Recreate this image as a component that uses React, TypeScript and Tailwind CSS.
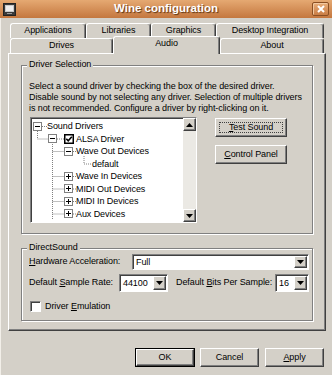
import React from "react";

const raised =
  "border border-t-white border-l-white border-r-[#404040] border-b-[#404040] shadow-[inset_-1px_-1px_0_#808080]";
const sunken =
  "border border-t-[#808080] border-l-[#808080] border-r-white border-b-white shadow-[inset_1px_1px_0_#404040]";

function DownArrow() {
  return (
    <svg width="7" height="4" viewBox="0 0 7 4">
      <path d="M0 0H7L3.5 4Z" fill="#000" />
    </svg>
  );
}
function UpArrow() {
  return (
    <svg width="7" height="4" viewBox="0 0 7 4">
      <path d="M0 4H7L3.5 0Z" fill="#000" />
    </svg>
  );
}

function Expander({ plus }: { plus?: boolean }) {
  return (
    <svg width="9" height="9" viewBox="0 0 9 9" className="shrink-0">
      <rect x="0.5" y="0.5" width="8" height="8" fill="#fff" stroke="#808080" />
      <path d="M2 4.5H7" stroke="#000" />
      {plus && <path d="M4.5 2V7" stroke="#000" />}
    </svg>
  );
}

function GroupBox({
  label,
  className,
  children,
}: {
  label: string;
  className: string;
  children: React.ReactNode;
}) {
  return (
    <div
      className={`relative border border-[#808080] shadow-[inset_1px_1px_0_#fff,1px_1px_0_#fff] ${className}`}
    >
      <span className="absolute -top-[7px] left-[5px] px-[2px] bg-[#d4d0c8] leading-[11px]">
        {label}
      </span>
      {children}
    </div>
  );
}

function Combo({ className, value }: { className: string; value: string }) {
  return (
    <div className={`${sunken} bg-white flex p-[1px] ${className}`}>
      <div className="flex-1 flex items-center pl-[2px] leading-none">{value}</div>
      <div className={`${raised} w-[13px] bg-[#d4d0c8] flex items-center justify-center`}>
        <DownArrow />
      </div>
    </div>
  );
}

function Tab({
  label,
  className,
  selected,
}: {
  label: string;
  className: string;
  selected?: boolean;
}) {
  return (
    <div
      className={`${className} flex items-center justify-center border-t border-l border-r border-t-white border-l-white border-r-[#404040] shadow-[inset_-1px_0_0_#808080] rounded-t-[3px] bg-[#d4d0c8] ${
        selected ? "relative z-10 -mt-[2px] h-[18px] pb-[3px]" : "h-[15px]"
      }`}
    >
      {label}
    </div>
  );
}

function Button({
  children,
  className,
  focus,
}: {
  children: React.ReactNode;
  className: string;
  focus?: boolean;
}) {
  return (
    <div
      className={`${raised} relative bg-[#d4d0c8] flex items-center justify-center ${className}`}
    >
      {focus && (
        <span className="absolute inset-[3px] border border-dotted border-[#404040]" />
      )}
      {children}
    </div>
  );
}

export default function App() {
  return (
    <div className="w-[332px] h-[375px] overflow-hidden bg-[#d4d0c8] flex flex-col text-black text-[9px] tracking-[-0.08px] font-['Liberation_Sans',Arial,sans-serif]">
      {/* Title bar */}
      <div className="h-[18px] shrink-0 grid grid-cols-[1fr_auto_1fr] items-center px-[3px] bg-linear-to-b from-[#e5a972] to-[#c4773e]">
        <div className="flex items-center">
          <svg width="13" height="13" viewBox="0 0 13 13">
            <rect x="0.5" y="0.5" width="12" height="12" fill="#3a3a3a" stroke="#222" />
            <rect x="2" y="2" width="9" height="7" fill="#c9c9c9" />
            <rect x="3" y="3" width="7" height="5" fill="#eeeeee" />
            <rect x="4" y="10" width="5" height="1" fill="#999" />
          </svg>
        </div>
        <div className="text-white font-bold text-[11.5px] tracking-normal leading-none [text-shadow:1px_1px_1px_#5b3515]">
          Wine configuration
        </div>
        <div className="flex justify-end">
          <div className="w-[17px] h-[14px] rounded-[2px] border border-[#8b4f22] bg-linear-to-b from-[#e8ae7a] to-[#c97d44] flex items-center justify-center shadow-[inset_1px_1px_0_#f2c89f]">
            <svg width="8" height="8" viewBox="0 0 8 8">
              <path d="M1 1L7 7M7 1L1 7" stroke="#fff" strokeWidth="2" />
            </svg>
          </div>
        </div>
      </div>

      {/* Body */}
      <div className="flex-1 flex flex-col pl-[7px] pr-[6px] border-l border-[#f2efe9]">
        {/* Tabs row 1 */}
        <div className="mt-[5px] flex h-[15px] pl-[2px]">
          <Tab label="Applications" className="w-[76px]" />
          <Tab label="Libraries" className="w-[65px]" />
          <Tab label="Graphics" className="w-[65px]" />
          <Tab label="Desktop Integration" className="w-[108px]" />
        </div>
        {/* Tabs row 2 */}
        <div className="flex h-[15px] items-start pl-[2px]">
          <Tab label="Drives" className="w-[103px]" />
          <Tab label="Audio" className="w-[107px]" selected />
          <Tab label="About" className="w-[104px]" />
        </div>

        {/* Panel */}
        <div className="h-[278px] border border-t-white border-l-white border-r-[#404040] border-b-[#404040] shadow-[inset_-1px_-1px_0_#808080] px-[12px] pt-[11px]">
          <GroupBox label="Driver Selection" className="h-[169px] pt-[15px] pl-[7px]">
            <p className="leading-[11px] whitespace-nowrap">
              Select a sound driver by checking the box of the desired driver.
              <br />
              Disable sound by not selecting any driver. Selection of multiple drivers
              <br />
              is not recommended. Configure a driver by right-clicking on it.
            </p>
            <div className="mt-[3px] flex items-start">
              {/* Tree */}
              <div className={`${sunken} ml-[1px] w-[167px] h-[106px] bg-white flex`}>
                <div className="relative flex-1 pt-[2px] leading-[12.5px]">
                  <svg
                    className="absolute left-0 top-0 pointer-events-none"
                    width="150"
                    height="102"
                    viewBox="0 0 150 102"
                  >
                    <g stroke="#808080" strokeDasharray="1 1" fill="none">
                      <path d="M11 8.5H16" />
                      <path d="M6.5 13V21H17" />
                      <path d="M26 21H33" />
                      <path d="M21.5 26V102" />
                      <path d="M21.5 33.5H33M42 33.5H45" />
                      <path d="M53 38V46H60" />
                      <path d="M21.5 58.5H33M42 58.5H45" />
                      <path d="M21.5 71H33M42 71H45" />
                      <path d="M21.5 83.5H33M42 83.5H45" />
                      <path d="M21.5 96H33M42 96H45" />
                    </g>
                  </svg>
                  <div className="relative h-[12.5px] flex items-center pl-[2px]">
                    <Expander />
                    <span className="ml-[5px]">Sound Drivers</span>
                  </div>
                  <div className="relative h-[12.5px] flex items-center pl-[17px]">
                    <Expander />
                    <svg width="10" height="10" viewBox="0 0 10 10" className="ml-[7px] shrink-0">
                      <rect x="0.75" y="0.75" width="8.5" height="8.5" fill="#fff" stroke="#000" strokeWidth="1.5" />
                      <path d="M2.3 4.8L4.2 6.8L7.8 2.8" stroke="#000" strokeWidth="1.6" fill="none" />
                    </svg>
                    <span className="ml-[2px]">ALSA Driver</span>
                  </div>
                  <div className="relative h-[12.5px] flex items-center pl-[33px]">
                    <Expander />
                    <span className="ml-[3px]">Wave Out Devices</span>
                  </div>
                  <div className="relative h-[12.5px] flex items-center pl-[61px]">
                    <span>default</span>
                  </div>
                  <div className="relative h-[12.5px] flex items-center pl-[33px]">
                    <Expander plus />
                    <span className="ml-[3px]">Wave In Devices</span>
                  </div>
                  <div className="relative h-[12.5px] flex items-center pl-[33px]">
                    <Expander plus />
                    <span className="ml-[3px]">MIDI Out Devices</span>
                  </div>
                  <div className="relative h-[12.5px] flex items-center pl-[33px]">
                    <Expander plus />
                    <span className="ml-[3px]">MIDI In Devices</span>
                  </div>
                  <div className="relative h-[12.5px] flex items-center pl-[33px]">
                    <Expander plus />
                    <span className="ml-[3px]">Aux Devices</span>
                  </div>
                </div>
                {/* Scrollbar */}
                <div className="w-[13px] flex flex-col bg-[#ebe9e4]">
                  <div className={`${raised} h-[13px] bg-[#d4d0c8] flex items-center justify-center`}>
                    <UpArrow />
                  </div>
                  <div className="flex-1" />
                  <div className={`${raised} h-[13px] bg-[#d4d0c8] flex items-center justify-center`}>
                    <DownArrow />
                  </div>
                </div>
              </div>
              {/* Buttons */}
              <div className="ml-[18px] mt-[1px] flex flex-col gap-[8px]">
                <Button className="w-[72px] h-[19px]" focus>
                  <span>
                    <u>T</u>est Sound
                  </span>
                </Button>
                <Button className="w-[72px] h-[19px]">
                  <span>
                    <u>C</u>ontrol Panel
                  </span>
                </Button>
              </div>
            </div>
          </GroupBox>

          <GroupBox label="DirectSound" className="mt-[14px] h-[73px] pl-[7px] pr-[3px] pt-[5px]">
            <div className="flex items-center h-[16px]">
              <div className="w-[103px]">
                <u>H</u>ardware Acceleration:
              </div>
              <Combo className="w-[177px] h-[16px]" value="Full" />
            </div>
            <div className="mt-[4px] flex items-center h-[18px]">
              <div className="w-[90px]">
                Default <u>S</u>ample Rate:
              </div>
              <Combo className="w-[49px] h-[18px]" value="44100" />
              <div className="ml-[8px] w-[99px]">
                Default <u>B</u>its Per Sample:
              </div>
              <Combo className="w-[34px] h-[18px]" value="16" />
            </div>
            <div className="mt-[9px] flex items-center h-[11px] pl-[1px]">
              <div className={`${sunken} w-[11px] h-[11px] bg-white`} />
              <span className="ml-[4px]">
                Driver <u>E</u>mulation
              </span>
            </div>
          </GroupBox>
        </div>

        {/* Bottom buttons */}
        <div className="mt-[17px] flex justify-end pr-[2px]">
          <div className="border border-black">
            <Button className="w-[58px] h-[17px]">OK</Button>
          </div>
          <Button className="ml-[5px] w-[59px] h-[19px]">Cancel</Button>
          <Button className="ml-[6px] w-[59px] h-[19px]">
            <span>
              <u>A</u>pply
            </span>
          </Button>
        </div>
      </div>
    </div>
  );
}
